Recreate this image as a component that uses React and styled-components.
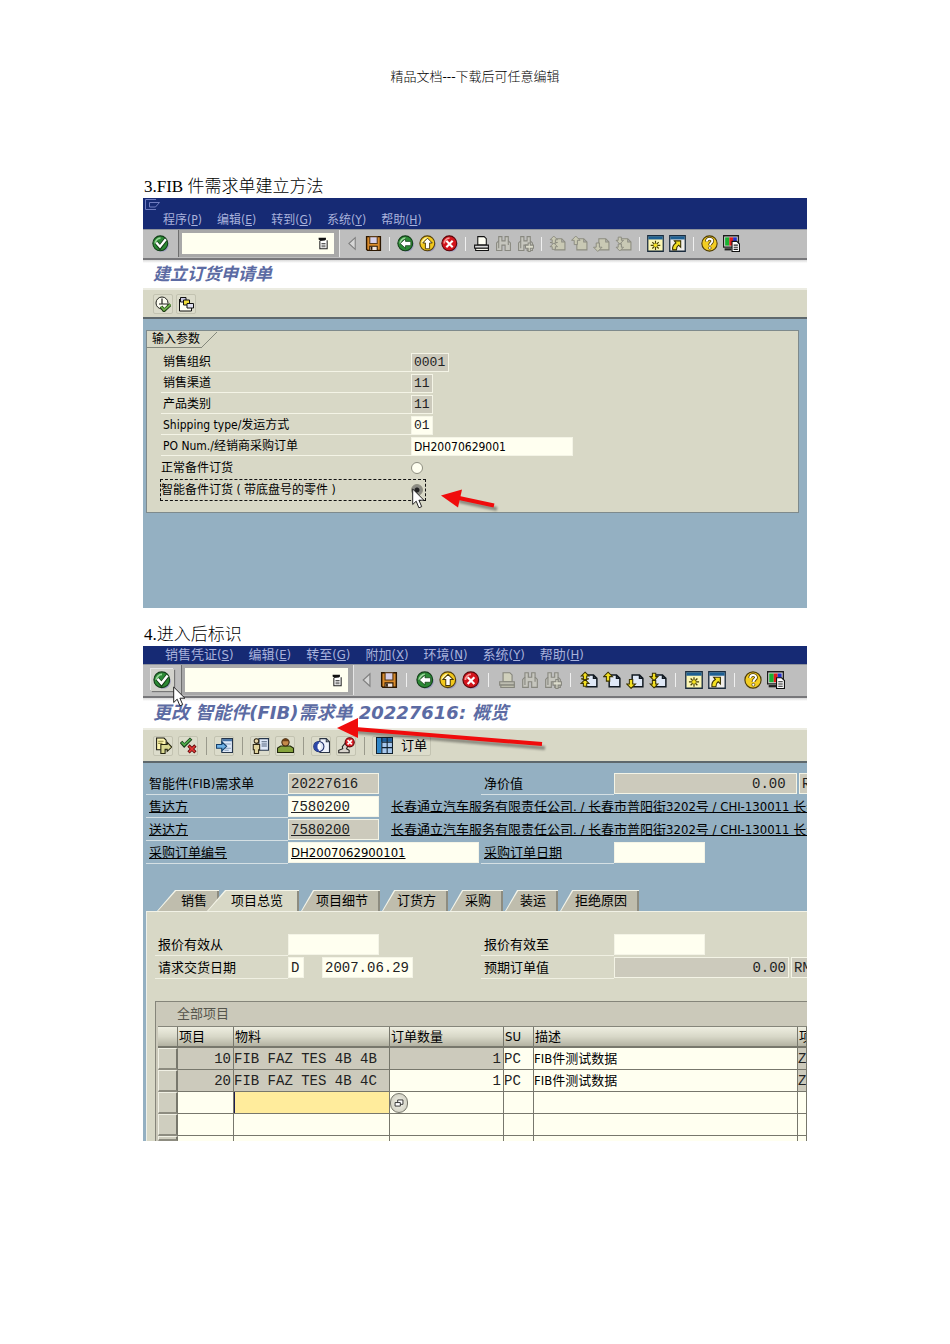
import { useState } from "react";
import styled, { createGlobalStyle, css } from "styled-components";

const UI_FONT = `"DejaVu Sans Condensed", "Noto Sans", "Noto Sans CJK SC", sans-serif`;
const MONO_FONT = `"Liberation Mono", "Noto Sans CJK SC", monospace`;

const GlobalStyle = createGlobalStyle`
  * {
    box-sizing: border-box;
  }
  body {
    margin: 0;
    background: #fff;
    color: #000;
  }
  button, input {
    font: inherit;
    color: inherit;
    margin: 0;
  }
`;

/* ---------- icons ---------- */

function PageIcon({ disabled, children }) {
  return (
    <>
      <path
        d="M5.500 3.500h6.500l3 3v7.500H5.500z M12 3.500v3h3"
        fill={disabled ? "#c9c9b4" : "#dfe8f6"}
        stroke={disabled ? "#8c8c80" : "#101820"}
        strokeWidth={disabled ? 1 : 1.3}
      />
      <g
        fill={disabled ? "#c9c9b4" : "#f4e021"}
        stroke={disabled ? "#8c8c80" : "#3a3200"}
        strokeWidth=".9"
      >
        {children}
      </g>
    </>
  );
}

function Ball({ color, light, edge, children }) {
  return (
    <>
      <circle cx="9.200" cy="9.200" r="6.600" fill="#8a8ac0" opacity=".7" />
      <circle cx="7.800" cy="7.800" r="7" fill={color} stroke={edge} />
      <path d="M3 8a5 5 0 0 1 5-5" fill="none" stroke={light} strokeWidth="1.600" />
      {children}
    </>
  );
}

function Binoculars({ plus }) {
  return (
    <g fill="#c6c6be" stroke="#888880">
      <path d="M3.500 1.500h3v4h3v-4h3v4l2 2v7h-5v-5h-3v5h-5v-7l2-2z" />
      <path d="M3.500 5.500v7 M12.500 5.500v4" fill="none" />
      {plus && <path d="M10.500 7.500h2v2h3v3h-3v3h-2v-3h-2.500v-3h2.500z" fill="#dcdccc" />}
    </g>
  );
}

const icons = {
  check: () => (
    <Ball color="#2c8a35" light="#9ad79a" edge="#123d18">
      <path d="M4 7l3.500 4.500L13 4" fill="none" stroke="#143a18" strokeWidth="3.600" />
      <path d="M4 7l3.500 4L13 4" fill="none" stroke="#fff" strokeWidth="2.200" />
    </Ball>
  ),
  history: () => (
    <>
      <path d="M2 1h9v2L9 5.500H5L2 3z" fill="#111" />
      <path d="M3.500 5v9.500h9V4" fill="#fff" stroke="#222" strokeWidth="1.300" />
      <path d="M5.500 8h5 M5.500 10h5 M5.500 12h5" stroke="#333" />
    </>
  ),
  triangle: () => (
    <path d="M11.500 2.500v11L5.500 8z" fill="#d6d6d6" stroke="#7e7e7e" />
  ),
  save: () => (
    <>
      <path d="M1.500 1.500h13v13h-12l-1-1z" fill="#d98b2b" stroke="#2b1600" strokeWidth="1.300" />
      <path d="M4.500 1.500h7v6.500h-7z" fill="#d5cfe8" stroke="#5a3a18" />
      <path d="M4.500 10.500h7v4h-7z" fill="#f1e6e0" stroke="#2b1600" />
      <path d="M6.200 11v3" stroke="#2b1600" strokeWidth="1.500" />
    </>
  ),
  back: () => (
    <Ball color="#2c8a35" light="#9ad79a" edge="#123d18">
      <path d="M3 8l5-4.500V6h5v4H8v2.500z" fill="#fff" stroke="#17401b" strokeWidth=".7" />
    </Ball>
  ),
  up: () => (
    <Ball color="#f2c81c" light="#fff6a8" edge="#54400a">
      <path d="M8 3l4.500 4.500H10V13H6V7.500H3.500z" fill="#fff" stroke="#4a3a08" strokeWidth=".9" />
    </Ball>
  ),
  exit: () => (
    <Ball color="#d3141c" light="#f79a96" edge="#5a0508">
      <path d="M5 5.500l6 6 M11 5.500l-6 6" stroke="#fff" strokeWidth="2" />
    </Ball>
  ),
  print: ({ disabled }) => (
    <g stroke={disabled ? "#85857c" : "#111"} fill={disabled ? "#d0d0bc" : "#fffff4"}>
      <path d="M4.500 1.500h6l2 2v6h-8z" />
      <path d="M1.500 9.500h13v3h-13z" fill={disabled ? "#bdbdb0" : "#d8d8d8"} />
      <path d="M2.500 12.500h12v2h-12z" />
    </g>
  ),
  find: () => <Binoculars />,
  findNext: () => <Binoculars plus />,
  pageFirst: ({ disabled }) => (
    <PageIcon disabled={disabled}>
      <path d="M4.500 1l3.500 3.500H6V7h2L4.500 8 1 7h2V4.500H1z" />
      <path d="M4.500 7.500L8 11H6v2.500H3V11H1z" />
    </PageIcon>
  ),
  pagePrev: ({ disabled }) => (
    <PageIcon disabled={disabled}>
      <path d="M4.500 1L8.500 5H6v4H3V5H.5z" />
    </PageIcon>
  ),
  pageNext: ({ disabled }) => (
    <PageIcon disabled={disabled}>
      <path d="M4.500 15.500L.5 11.500H3v-4h3v4h2.500z" />
    </PageIcon>
  ),
  pageLast: ({ disabled }) => (
    <PageIcon disabled={disabled}>
      <path d="M4.500 8.500L1 5h2V2h3v3h2z" />
      <path d="M4.500 15L1 11.500h2v-3h3v3h2z" />
    </PageIcon>
  ),
  session: () => (
    <>
      <path d="M.7.7h14.600v14.600H.7z" fill="#fbf6b4" stroke="#1b2c3e" strokeWidth="1.200" />
      <path d="M1.200 1.200h13.600v3H1.200z" fill="#1e5f92" />
      <path d="M8 5.500v8.500 M3.500 9.700h9 M5 6.700l6 6 M11 6.700l-6 6" stroke="#4b4300" strokeWidth="1.100" />
      <circle cx="8" cy="9.700" r="1.700" fill="#f6e321" />
    </>
  ),
  shortcut: () => (
    <>
      <path d="M.7.7h14.600v14.600H.7z" fill="#f0eeea" stroke="#1b2c3e" strokeWidth="1.200" />
      <path d="M1.200 1.200h13.600v3H1.200z" fill="#1e5f92" />
      <path
        d="M5 5.500h6v6l-2-2c-1.500 1-2 2.500-2 4.500H3.500c-.5-3 .5-5 3-6.500z"
        fill="#f4e021"
        stroke="#3a3200"
      />
    </>
  ),
  help: () => (
    <>
      <circle cx="8" cy="8" r="7.200" fill="#f3cd22" stroke="#4b3a06" />
      <path
        d="M5.500 6.200c0-3.600 5.200-3.200 5.200-.5 0 1.700-2.300 1.800-2.300 4"
        fill="none"
        stroke="#4b3a06"
        strokeWidth="3.200"
      />
      <path
        d="M5.500 6.200c0-3.600 5.200-3.200 5.200-.5 0 1.700-2.300 1.800-2.300 4"
        fill="none"
        stroke="#fff"
        strokeWidth="1.800"
      />
      <circle cx="8.300" cy="12.200" r="1.300" fill="#fff" stroke="#4b3a06" strokeWidth=".6" />
    </>
  ),
  layout: () => (
    <>
      <path d="M.5.700h14v10.800H.5z" fill="#ddd" stroke="#1c1c1c" strokeWidth="1.200" />
      <path d="M2 2.200h4V10H2z" fill="#19b132" />
      <path d="M6 2.200h3.500V10H6z" fill="#e01b1b" />
      <path d="M9.500 2.200H13V10H9.500z" fill="#2330c8" />
      <path d="M1.500 13.500h6.500" stroke="#222" strokeWidth="2" />
      <path d="M8.500 6h4.500l2.500 2.500v7h-7z" fill="#fff" stroke="#111" />
      <path d="M10 9.500h4 M10 11.500h4 M10 13.500h4" stroke="#222" />
    </>
  ),
  execute: () => (
    <>
      <circle cx="7" cy="7" r="6" fill="#fdfdf2" stroke="#23231e" />
      <path d="M7 2.500V8 M4 8h8" stroke="#23231e" strokeWidth="1.200" />
      <path d="M6 10.500l3 4 6.500-6" fill="none" stroke="#1d3d12" strokeWidth="3.400" />
      <path d="M6 10.500l3 3.500 6.500-5.500" fill="none" stroke="#6fb24c" strokeWidth="1.800" />
    </>
  ),
  variants: () => (
    <>
      <path d="M1.500 3v12h12v-5" fill="#fffff4" stroke="#111" />
      <path d="M2.500 1.500h5.500v4.500h-5.500z" fill="#c9c8e4" stroke="#111" />
      <path d="M5.500 4h6v5h-6z" fill="#f0dc3a" stroke="#111" />
      <path d="M9 7.500h6.500v4.500H9z" fill="#e0e0f2" stroke="#111" />
    </>
  ),
  otherDoc: () => (
    <>
      <path d="M1.500 1h7l2 2v9h-9z" fill="#fdf6b0" stroke="#1a1a12" />
      <path d="M3 4h5 M3 6h4" stroke="#8d8640" />
      <path d="M5.500 7h6V5l4.300 4.500-4.300 4v-2H9.500v4h-4z" fill="#d9d890" stroke="#24240f" />
    </>
  ),
  checkCross: () => (
    <>
      <path d="M1 4.500l3 3.500L10.500 1.500" fill="none" stroke="#143a18" strokeWidth="3.200" />
      <path d="M1.500 5l2.500 2.500L10 2" fill="none" stroke="#4fae4c" strokeWidth="1.600" />
      <path d="M8 8l6.500 6.500 M14.500 8L8 14.500" stroke="#5a0508" strokeWidth="3" />
      <path d="M8.500 8.500l5.500 5.500 M14 8.500L8.500 14" stroke="#e33a36" strokeWidth="1.600" />
    </>
  ),
  display: () => (
    <>
      <path d="M5.500 1.500h10v13h-10z" fill="#dfe9f8" stroke="#26364a" />
      <path d="M6 2h9v2H6z" fill="#4472a4" />
      <path d="M8 6.500h6 M8 10.500h6 M8 12.500h4" stroke="#8aa2bd" />
      <path d="M.5 7h5V4.500l4.500 4.300-4.500 4.300v-2.500h-5z" fill="#6fb2e6" stroke="#16406b" />
    </>
  ),
  partner: () => (
    <>
      <path d="M6.500 1.500h9v11h-9z" fill="#dfe9f8" stroke="#26364a" />
      <path d="M9 4.500h5 M9 6.500h5 M9 8.500h5" stroke="#51637a" />
      <circle cx="4.200" cy="3.800" r="2.200" fill="#e8d6a8" stroke="#2e2614" />
      <path d="M1.200 7h6v5h-1v3.500h-4V12h-1z" fill="#e1d49c" stroke="#2e2614" />
    </>
  ),
  person: () => (
    <>
      <path d="M.5 14.500v-4l3-2h9l3 2v4z" fill="#86a43c" stroke="#20270c" />
      <circle cx="8" cy="5" r="3.400" fill="#c58a4a" stroke="#38220c" />
      <path d="M5 4c.5-3 5.500-3 6 0" fill="#6c3e14" />
    </>
  ),
  config: () => (
    <>
      <path d="M6.500 1.500h6l3 3v10h-9z" fill="#eef2fb" stroke="#2a3444" />
      <path d="M12.500 1.500v3h3" fill="none" stroke="#2a3444" />
      <circle cx="5.500" cy="9" r="4.800" fill="#dfe6f4" stroke="#1b2a66" />
      <path d="M5.500 4.200a4.800 4.800 0 0 0 0 9.600z" fill="#2c47a8" />
      <ellipse cx="5.800" cy="9" rx="1.600" ry="3" fill="#fff" />
    </>
  ),
  reject: () => (
    <>
      <path d="M.7 14.800h9.800v-2.300L8 11l2-4-3-1.500L4 9l.5 2-3.800 1.500z" fill="#d8d4cc" stroke="#222" />
      <circle cx="11" cy="5" r="4.300" fill="#dd2028" stroke="#5a0508" />
      <path d="M9 3l4 4 M13 3L9 7" stroke="#fff" strokeWidth="1.600" />
    </>
  ),
  grid: () => (
    <>
      <path d="M.5.500h15v15H.5z" fill="#a9c9ee" stroke="#10202e" />
      <path d="M1 1h14v3.500H1z" fill="#1f5f9c" />
      <path d="M1 1h4v14H1z" fill="#2e86c8" />
      <path d="M5.500 .5v15 M10.500 .5v15 M5.500 5h10 M5.500 10h10" stroke="#10202e" />
    </>
  ),
  matchcode: () => (
    <g fill="#fff" stroke="#222">
      <path d="M6.500 4.500h6v5h-6z" />
      <path d="M3.500 7.500h6v4h-6z" />
    </g>
  ),
};

function Icon({ name, size = 17, disabled }) {
  const Shape = icons[name];
  return (
    <svg width={size} height={size} viewBox="0 0 16 16" aria-hidden="true">
      <Shape disabled={disabled} />
    </svg>
  );
}

/* ---------- document page ---------- */

const Page = styled.main`
  padding: 67px 143px 200px;
`;
const Running = styled.header`
  margin-bottom: 89px;
  text-align: center;
  font: 300 13px/20px "Liberation Serif", "Noto Sans CJK SC", serif;
`;
const Step = styled.h2`
  margin: 0;
  padding-left: 1px;
  font: 300 17px/22px "Liberation Serif", "Noto Sans CJK SC", serif;
`;
const Screen = styled.section`
  position: relative;
  overflow: hidden;
  margin-bottom: 16px;
  background: #94b0c2;
  font: ${(p) => p.$size}px/18px ${UI_FONT};
  white-space: nowrap;
`;
const Overlay = styled.svg`
  position: absolute;
  left: ${(p) => p.$x}px;
  top: ${(p) => p.$y}px;
  overflow: visible;
  pointer-events: none;
`;
const Shadow = styled.path`
  stroke: #000;
  stroke-width: 4px;
  opacity: 0.35;
  filter: blur(1px);
`;

/* ---------- window chrome ---------- */

const MenuBar = styled.nav`
  display: flex;
  gap: ${(p) => p.$gap}px;
  padding: 0 ${(p) => p.$inset}px;
  background: #162a74;
  color: #a9b2dc;
`;
const TitleStrip = styled.div`
  display: flex;
  height: 13px;
  padding: 1px 2px;
  background: #162a74;
`;
const MenuButton = styled.button`
  padding: 0;
  border: 0;
  background: none;
  line-height: 18px;
`;
const Toolbar = styled.div`
  display: flex;
  align-items: stretch;
  height: ${(p) => p.$height}px;
  padding-bottom: 1px;
  background: #bebebe;
  border-top: 1px solid #8f939c;
  border-bottom: 2px solid #77777a;
`;
const ToolGroup = styled.div`
  display: flex;
  align-items: center;
  border-left: 1px solid #e6e6e6;
`;
const EnterCell = styled.div`
  display: flex;
  align-items: center;
  justify-content: center;
  width: ${(p) => p.$width}px;
  border-right: 1px solid #6e6e6e;
`;
const ToolButton = styled.button`
  display: flex;
  align-items: center;
  justify-content: center;
  width: ${(p) => p.$width}px;
  height: 22px;
  padding: 0;
  border: 0;
  background: none;
  ${(p) =>
    p.$raised &&
    css`
      background: #d2d2cc;
      box-shadow: 1px 1px 1px #777, -1px -1px 0 #e8e8e8;
    `}
`;
const ToolGap = styled.span`
  width: ${(p) => p.$width}px;
  height: 14px;
  background: linear-gradient(#efefef, #efefef) center / 1px 100% no-repeat;
`;
const Command = styled.div`
  display: flex;
  align-items: center;
  width: ${(p) => p.$width}px;
  padding: 3px 5px 3px 3px;
  background: #a8a8a8;
`;
const CommandBox = styled.label`
  display: flex;
  align-items: center;
  flex: 1;
  min-width: 0;
  height: 100%;
  padding-right: 4px;
  background: #fffff0;
  input {
    flex: 1;
    min-width: 0;
    height: 100%;
    padding: 0 4px;
    border: 0;
    outline: 0;
    background: none;
  }
`;
const Title = styled.h1`
  margin: 0;
  padding: 0 10px;
  background: linear-gradient(#d9d9d9, #fff 3px);
  border-bottom: 2px solid #ecece2;
  color: #5c6ba3;
  font: italic bold ${(p) => p.$size}px / ${(p) => p.$line}px "DejaVu Sans",
    "Noto Sans CJK SC", sans-serif;
`;
const AppBar = styled.div`
  display: flex;
  align-items: center;
  gap: ${(p) => p.$gap}px;
  height: ${(p) => p.$height}px;
  padding: 0 10px;
  background: #d8d8c6;
  border-bottom: 2px solid #5e686c;
`;
const AppButton = styled.button`
  display: flex;
  align-items: center;
  justify-content: center;
  gap: 8px;
  min-width: 20px;
  height: 20px;
  padding: 0 ${(p) => (p.$text ? 3 : 0)}px;
  border: 1px solid #c3c3b1;
  border-radius: 2px;
  background: #dcdccb;
`;
const AppGap = styled.span`
  width: 6px;
  height: 18px;
  background: linear-gradient(#9a9a8c, #9a9a8c) center / 1px 100% no-repeat;
`;

function Menu({ items, gap, inset }) {
  return (
    <MenuBar $gap={gap} $inset={inset}>
      {items.map(([text, key]) => (
        <MenuButton key={text} type="button">
          {text}(<u>{key}</u>)
        </MenuButton>
      ))}
    </MenuBar>
  );
}

const toolGroups = (printOff, pagesOff) => [
  [["triangle"], ["save"]],
  [["back"], ["up"], ["exit"]],
  [["print", printOff], ["find"], ["findNext"]],
  [
    ["pageFirst", pagesOff],
    ["pagePrev", pagesOff],
    ["pageNext", pagesOff],
    ["pageLast", pagesOff],
  ],
  [["session"], ["shortcut"]],
  [["help"], ["layout"]],
];

function StandardToolbar({ large, id }) {
  const cell = large ? 23 : 22;
  const size = large ? 18 : 17;
  return (
    <Toolbar $height={large ? 34 : 31}>
      <EnterCell $width={large ? 39 : 36}>
        <ToolButton type="button" aria-label="Enter" $width={cell} $raised={large}>
          <Icon name="check" size={size} />
        </ToolButton>
      </EnterCell>
      <Command $width={large ? 171 : 160}>
        <CommandBox htmlFor={id}>
          <input id={id} aria-label="Command" />
          <Icon name="history" size={13} />
        </CommandBox>
      </Command>
      <ToolGroup>
        {toolGroups(large, !large).map((group, i) => [
          i > 0 && <ToolGap key={i} $width={large ? 13 : 10} />,
          ...group.map(([name, off]) => (
            <ToolButton key={name} type="button" aria-label={name} $width={cell}>
              <Icon name={name} size={size} disabled={off} />
            </ToolButton>
          )),
        ])}
      </ToolGroup>
    </Toolbar>
  );
}

/* ---------- form parts ---------- */

const Field = styled.input`
  width: ${(p) => p.$width}px;
  height: ${(p) => p.$height || 21}px;
  flex: none;
  padding: 0 2px;
  border: 1px solid #f4f4e6;
  border-radius: 0;
  outline: 0;
  background: ${(p) => (p.readOnly ? "#cccabc" : "#fffff0")};
  text-align: ${(p) => p.$align || "left"};
  text-decoration: ${(p) => (p.$link ? "underline" : "none")};
  ${(p) =>
    p.$mono &&
    css`
      font-family: ${MONO_FONT};
      font-size: ${p.$mono}px;
      color: #222;
    `}
`;
const Label = styled.label`
  display: block;
  padding-left: ${(p) => p.$pad || 3}px;
  border-bottom: 1px solid ${(p) => p.$line};
  line-height: ${(p) => p.$height || 21}px;
  text-decoration: ${(p) => (p.$link ? "underline" : "none")};
`;

/* selection screen */
const Selection = styled.div`
  padding: 11px 8px 95px 3px;
`;
const Group = styled.fieldset`
  min-width: 0;
  margin: 0;
  padding: 0 0 12px;
  border: 1px solid #7e8a8c;
  background: #d8d8c6;
`;
const GroupTitle = styled.legend`
  float: left;
  width: 70px;
  height: 17px;
  padding: 0 5px;
  line-height: 16px;
  background: linear-gradient(135deg, transparent 49%, #84887c 49%, #84887c 54%, transparent 54%)
      right / 16px 100% no-repeat,
    linear-gradient(#84887c, #84887c) left bottom / 54px 1px no-repeat;
`;
const SelectionRows = styled.div`
  clear: both;
  display: grid;
  gap: 2px;
  padding: 5px 14px 0;
`;
const SelectionRow = styled.div`
  display: grid;
  grid-template-columns: 250px 1fr;
  height: 19px;
`;
const RadioRow = styled.label`
  display: flex;
  align-items: center;
  justify-content: space-between;
  width: 264px;
  height: 20px;
  padding-right: 2px;
  outline: ${(p) => (p.$focus ? "1px dashed #111" : "none")};
`;
const Radio = styled.input`
  appearance: none;
  width: 12px;
  height: 12px;
  border: 1px solid #8e8e80;
  border-radius: 50%;
  background: #fffff0;
  &:checked {
    background: radial-gradient(#222 0 2px, #8b8b84 3px 5px);
  }
`;

/* order screen */
const FormRows = styled.div`
  display: grid;
  gap: 2px;
  padding: ${(p) => p.$padding};
`;
const FormRow = styled.div`
  display: grid;
  grid-template-columns: ${(p) => p.$first}px 193px 133px 1fr;
  height: 21px;
`;
const Cell = styled.div`
  display: flex;
  gap: ${(p) => p.$gap || 2}px;
  min-width: 0;
`;
const Address = styled.a`
  color: inherit;
  line-height: 22px;
`;
const Tabs = styled.div`
  display: flex;
  gap: 2px;
  padding: 27px 14px 0;
`;
const slope = (n) => `polygon(0 100%, ${n}px 0, 100% 0, 100% 100%)`;
const Tab = styled.button`
  position: relative;
  isolation: isolate;
  height: 21px;
  padding: 0 ${(p) => (p.$active ? 16 : 12)}px 0 ${(p) => (p.$wide ? 24 : 15)}px;
  margin-left: ${(p) => (p.$active ? -14 : 0)}px;
  border: 0;
  background: none;
  &::before,
  &::after {
    content: "";
    position: absolute;
    z-index: -1;
    inset: 0;
    background: #f6f6ea;
    clip-path: ${(p) => slope(p.$wide ? 18 : 12)};
  }
  &::after {
    inset: 1px 0 0 1px;
    background: ${(p) => (p.$active ? "#d8d8c6" : "#bfbdad")};
    border-right: 2px solid #8d8c80;
  }
`;
const TabPanel = styled.div`
  margin-left: 3px;
  border-left: 1px solid #eef0e8;
  border-top: 1px solid #f2f2e6;
  background: #d8d8c6;
`;
const Items = styled.div`
  margin: 23px 0 0 8px;
  padding-left: 2px;
  border: solid #85857a;
  border-width: 1px 0 0 1px;
  background: #cbc9ba;
  overflow: hidden;
`;
const ItemsTable = styled.table`
  width: 100%;
  table-layout: fixed;
  border-spacing: 0;
  caption {
    padding-left: 19px;
    text-align: left;
    line-height: 24px;
    color: #55554c;
    border-bottom: 1px solid #85857a;
  }
  th {
    height: 21px;
    padding: 0 1px;
    overflow: hidden;
    border-right: 1px solid #77776c;
    border-bottom: 2px solid #77776c;
    background: linear-gradient(#eeeee0, #d8d8c8 50%, #b3b2a2);
    font-weight: normal;
    text-align: left;
  }
`;
const Td = styled.td`
  height: ${(p) => (p.$cut ? 5 : 22)}px;
  padding: 0;
  overflow: hidden;
  border-right: 1px solid #77776c;
  border-bottom: ${(p) => (p.$cut ? 0 : 1)}px solid #77776c;
  background: ${(p) => (p.$off ? "#cccabc" : "#fffff0")};
  text-align: ${(p) => p.$align || "left"};
  ${(p) =>
    p.$mono &&
    css`
      padding-right: ${p.$align ? 2 : 0}px;
      font-family: ${MONO_FONT};
      font-size: 14px;
      color: #222;
    `}
`;
const Selector = styled.td`
  padding: 0;
  border: 1px solid #f0f0e4;
  border-right: 2px solid #77776c;
  border-bottom: 2px solid #8d8c80;
  background: #cfcebf;
`;
const MaterialInput = styled.input`
  display: block;
  width: 100%;
  height: 21px;
  padding: 0 2px;
  border: 0;
  border-left: 1px solid #1c1c50;
  outline: 0;
  background: #ffec9c;
`;
const MatchButton = styled.button`
  display: flex;
  align-items: center;
  justify-content: center;
  width: 18px;
  height: 20px;
  padding: 0;
  border: 1px solid #77776c;
  border-radius: 9px;
  background: radial-gradient(#f4f4ea, #c8c7b8);
`;

const selectionFields = [
  { id: "org", label: "销售组织", value: "0001", width: 38, readOnly: true, mono: 13 },
  { id: "channel", label: "销售渠道", value: "11", width: 22, readOnly: true, mono: 13 },
  { id: "division", label: "产品类别", value: "11", width: 22, readOnly: true, mono: 13 },
  { id: "shipping", label: "Shipping type/发运方式", value: "01", width: 22, mono: 13 },
  { id: "po", label: "PO Num./经销商采购订单", value: "DH20070629001", width: 162 },
];

function Pointer({ x, y }) {
  return (
    <Overlay $x={x} $y={y} width="13" height="21" viewBox="0 0 13 21">
      <path
        d="M.7 1v15.500l3.500-3.300 2.700 6.600 2.800-1.200-2.800-6.400h5z"
        fill="#fff"
        stroke="#222"
      />
    </Overlay>
  );
}

function SelectionScreen() {
  const [kind, setKind] = useState("fib");
  return (
    <Screen $size={12}>
      <TitleStrip>
        <svg width="16" height="12" viewBox="0 0 16 12" fill="none" stroke="#6f7cc0">
          <path d="M11 .5H.5v10H11 M4.500 3.500h10l-4 4.500h-6z" />
        </svg>
      </TitleStrip>
      <Menu
        gap={15}
        inset={20}
        items={[["程序", "P"], ["编辑", "E"], ["转到", "G"], ["系统", "Y"], ["帮助", "H"]]}
      />
      <StandardToolbar id="command-1" />
      <Title $size={17} $line={28}>建立订货申请单</Title>
      <AppBar $height={29} $gap={3}>
        <AppButton type="button" aria-label="Execute">
          <Icon name="execute" size={16} />
        </AppButton>
        <AppButton type="button" aria-label="Variants">
          <Icon name="variants" size={16} />
        </AppButton>
      </AppBar>
      <Selection>
        <Group>
          <GroupTitle>输入参数</GroupTitle>
          <SelectionRows>
            {selectionFields.map((f) => (
              <SelectionRow key={f.id}>
                <Label htmlFor={f.id} $pad={2} $height={18} $line="#f4f4e6">
                  {f.label}
                </Label>
                <Field
                  id={f.id}
                  defaultValue={f.value}
                  readOnly={f.readOnly}
                  $width={f.width}
                  $height={19}
                  $mono={f.mono}
                />
              </SelectionRow>
            ))}
            <RadioRow>
              正常备件订货
              <Radio
                type="radio"
                name="kind"
                checked={kind === "normal"}
                onChange={() => setKind("normal")}
              />
            </RadioRow>
            <RadioRow $focus>
              智能备件订货 ( 带底盘号的零件 )
              <Radio
                type="radio"
                name="kind"
                checked={kind === "fib"}
                onChange={() => setKind("fib")}
              />
            </RadioRow>
          </SelectionRows>
        </Group>
      </Selection>
      <Overlay $x={298} $y={290} width="56" height="24" viewBox="0 0 56 24">
        <Shadow d="M18 13l38 8" />
        <path d="M18 10l35 7.500" stroke="#f00c0c" strokeWidth="4" />
        <path d="M0 7.500L21 1.500l-4 18z" fill="#f00c0c" />
      </Overlay>
      <Pointer x={269} y={290} />
    </Screen>
  );
}

const address = "长春通立汽车服务有限责任公司. / 长春市普阳街3202号 / CHI-130011 长春";

const rows = [
  { no: 10, material: "FIB FAZ TES 4B 4B", qtyOff: true },
  { no: 20, material: "FIB FAZ TES 4B 4C" },
];

function OrderScreen() {
  const [tab, setTab] = useState("项目总览");
  const tabs = ["销售", "项目总览", "项目细节", "订货方", "采购", "装运", "拒绝原因"];
  return (
    <Screen $size={13}>
      <Menu
        gap={15}
        inset={22}
        items={[
          ["销售凭证", "S"],
          ["编辑", "E"],
          ["转至", "G"],
          ["附加", "X"],
          ["环境", "N"],
          ["系统", "Y"],
          ["帮助", "H"],
        ]}
      />
      <StandardToolbar id="command-2" large />
      <Title $size={18} $line={30}>更改 智能件(FIB)需求单 20227616: 概览</Title>
      <AppBar $height={33} $gap={5}>
        <AppButton type="button" aria-label="Other document">
          <Icon name="otherDoc" />
        </AppButton>
        <AppButton type="button" aria-label="Check">
          <Icon name="checkCross" />
        </AppButton>
        <AppGap />
        <AppButton type="button" aria-label="Display">
          <Icon name="display" />
        </AppButton>
        <AppGap />
        <AppButton type="button" aria-label="Partner">
          <Icon name="partner" />
        </AppButton>
        <AppButton type="button" aria-label="Person">
          <Icon name="person" />
        </AppButton>
        <AppGap />
        <AppButton type="button" aria-label="Configuration">
          <Icon name="config" />
        </AppButton>
        <AppButton type="button" aria-label="Reject">
          <Icon name="reject" />
        </AppButton>
        <AppGap />
        <AppButton type="button" $text>
          <Icon name="grid" />
          订单
        </AppButton>
      </AppBar>

      <FormRows $padding="10px 0 0 3px">
        <FormRow $first={142}>
          <Label htmlFor="order" $line="#d5e0e4">智能件(FIB)需求单</Label>
          <Field id="order" readOnly defaultValue="20227616" $width={91} $mono={14} />
          <Label htmlFor="net" $line="#d5e0e4">净价值</Label>
          <Cell>
            <Field id="net" readOnly defaultValue="0.00 " $width={183} $mono={14} $align="right" />
            <Field aria-label="净价值 RMB" readOnly defaultValue="RMB" $width={40} $mono={14} />
          </Cell>
        </FormRow>
        <FormRow $first={142}>
          <Label htmlFor="sold" $line="#d5e0e4" $link>售达方</Label>
          <Cell $gap={12}>
            <Field id="sold" defaultValue="7580200" $width={91} $mono={14} $link />
            <Address href="#sold">{address}</Address>
          </Cell>
        </FormRow>
        <FormRow $first={142}>
          <Label htmlFor="ship" $line="#d5e0e4" $link>送达方</Label>
          <Cell $gap={12}>
            <Field id="ship" readOnly defaultValue="7580200" $width={91} $mono={14} $link />
            <Address href="#ship">{address}</Address>
          </Cell>
        </FormRow>
        <FormRow $first={142}>
          <Label htmlFor="purchase" $line="#d5e0e4" $link>采购订单编号</Label>
          <Field id="purchase" defaultValue="DH2007062900101" $width={191} $link />
          <Label htmlFor="purchase-date" $line="#d5e0e4" $link>采购订单日期</Label>
          <Field id="purchase-date" $width={91} />
        </FormRow>
      </FormRows>

      <Tabs role="tablist">
        {tabs.map((name, i) => (
          <Tab
            key={name}
            type="button"
            role="tab"
            aria-selected={tab === name}
            $active={tab === name}
            $wide={i < 2}
            onClick={() => setTab(name)}
          >
            {name}
          </Tab>
        ))}
      </Tabs>
      <TabPanel role="tabpanel">
        <FormRows $padding="22px 0 0 8px">
          <FormRow $first={133}>
            <Label htmlFor="from" $line="#f0f0e2">报价有效从</Label>
            <Field id="from" $width={91} />
            <Label htmlFor="to" $line="#f0f0e2">报价有效至</Label>
            <Field id="to" $width={91} />
          </FormRow>
          <FormRow $first={133}>
            <Label htmlFor="date" $line="#f0f0e2">请求交货日期</Label>
            <Cell $gap={18}>
              <Field aria-label="日期类型" defaultValue="D" $width={16} $mono={14} />
              <Field id="date" defaultValue="2007.06.29" $width={91} $mono={14} />
            </Cell>
            <Label htmlFor="expected" $line="#f0f0e2">预期订单值</Label>
            <Cell>
              <Field id="expected" readOnly defaultValue="0.00" $width={175} $mono={14} $align="right" />
              <Field aria-label="预期订单值 RMB" readOnly defaultValue="RMB" $width={40} $mono={14} />
            </Cell>
          </FormRow>
        </FormRows>
        <Items>
          <ItemsTable>
            <caption>全部项目</caption>
            <colgroup>
              <col width="20" />
              <col width="56" />
              <col width="156" />
              <col width="114" />
              <col width="30" />
              <col />
              <col width="9" />
            </colgroup>
            <thead>
              <tr>
                <th aria-label="选择" />
                <th>项目</th>
                <th>物料</th>
                <th>订单数量</th>
                <th>SU</th>
                <th>描述</th>
                <th>项</th>
              </tr>
            </thead>
            <tbody>
              {rows.map((row) => (
                <tr key={row.no}>
                  <Selector />
                  <Td $off $mono $align="right">{row.no}</Td>
                  <Td $off $mono>{row.material}</Td>
                  <Td $off={row.qtyOff} $mono $align="right">1</Td>
                  <Td $mono>PC</Td>
                  <Td>FIB件测试数据</Td>
                  <Td $off $mono>Z</Td>
                </tr>
              ))}
              <tr>
                <Selector />
                <Td />
                <Td>
                  <MaterialInput aria-label="物料" />
                </Td>
                <Td>
                  <MatchButton type="button" aria-label="Search">
                    <Icon name="matchcode" size={14} />
                  </MatchButton>
                </Td>
                <Td />
                <Td />
                <Td />
              </tr>
              {[false, true].map((cut) => (
                <tr key={String(cut)}>
                  <Selector />
                  {[0, 1, 2, 3, 4, 5].map((n) => (
                    <Td key={n} $cut={cut} />
                  ))}
                </tr>
              ))}
            </tbody>
          </ItemsTable>
        </Items>
      </TabPanel>
      <Overlay $x={194} $y={70} width="210" height="32" viewBox="0 0 210 32">
        <Shadow d="M20 16l188 16" />
        <path d="M18 13l187 15" stroke="#f00c0c" strokeWidth="4" />
        <path d="M0 12L21 2v20z" fill="#f00c0c" />
      </Overlay>
      <Pointer x={30} y={40} />
    </Screen>
  );
}

export default function App() {
  return (
    <>
      <GlobalStyle />
      <Page>
        <Running>精品文档---下载后可任意编辑</Running>
        <Step>3.FIB 件需求单建立方法</Step>
        <SelectionScreen />
        <Step>4.进入后标识</Step>
        <OrderScreen />
      </Page>
    </>
  );
}
